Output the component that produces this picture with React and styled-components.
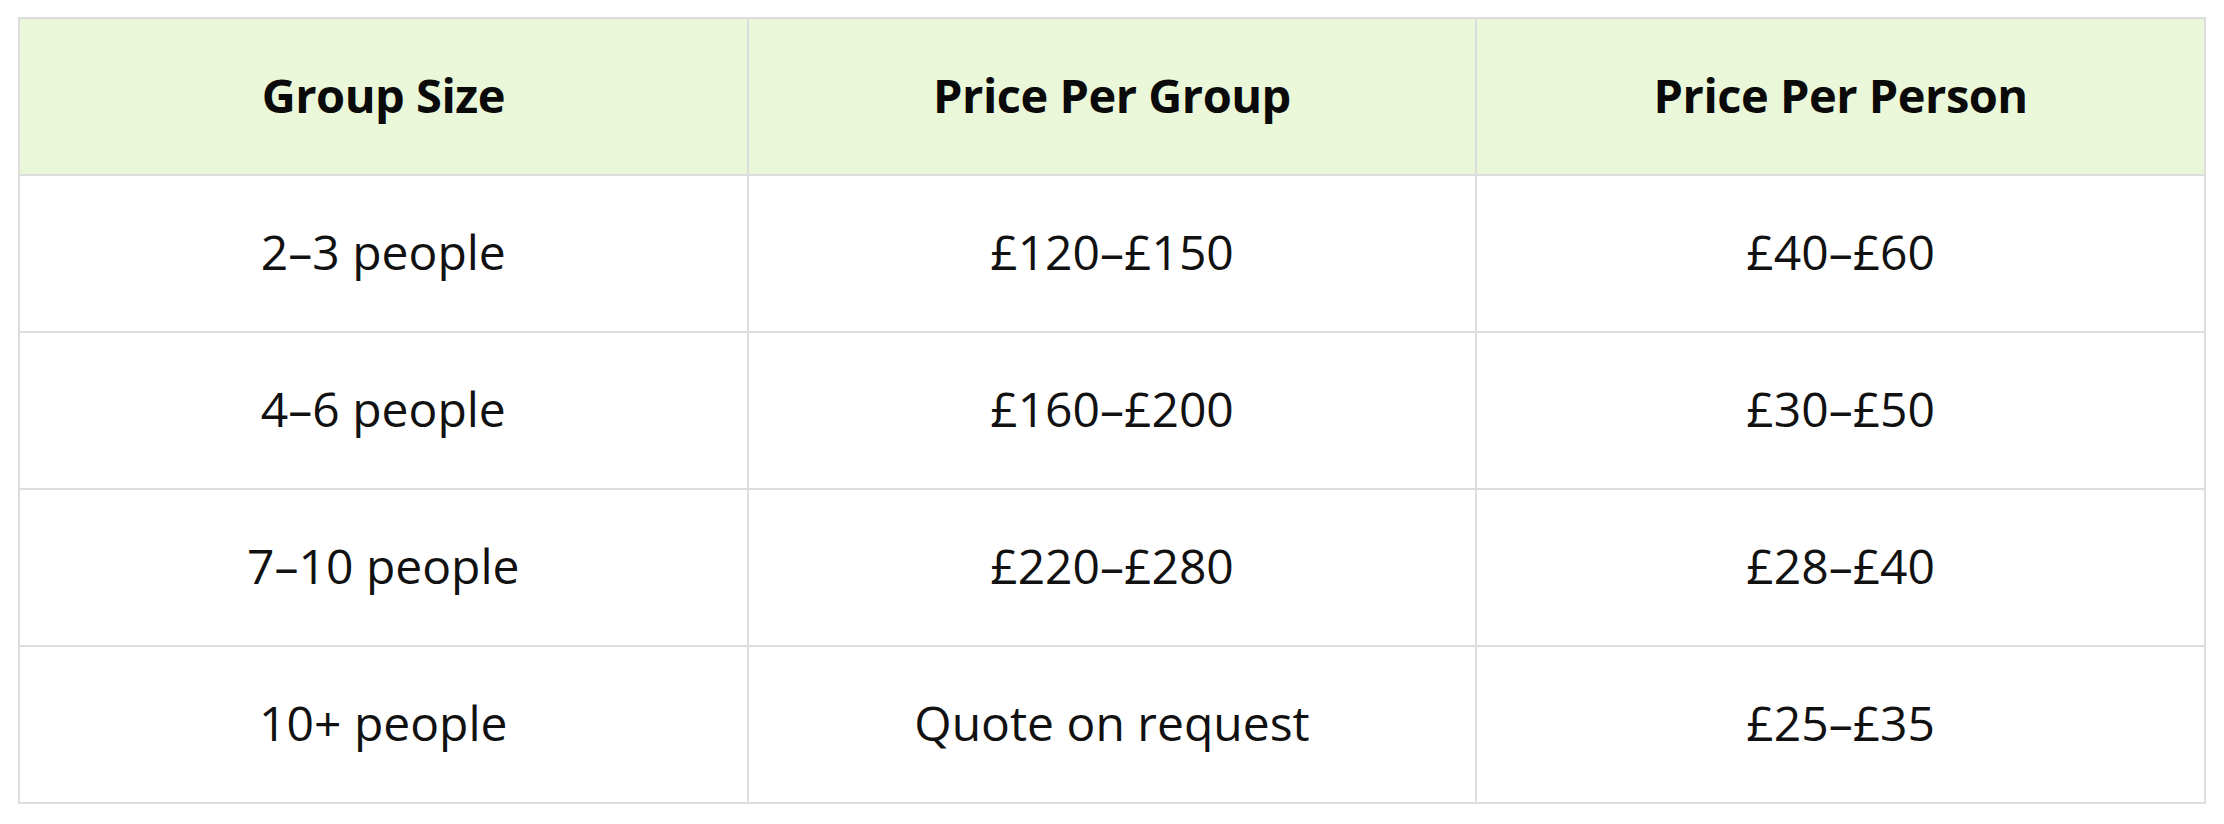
import React from 'react'
import styled, { createGlobalStyle } from 'styled-components'

const GlobalStyle = createGlobalStyle`
  html, body {
    margin: 0;
    padding: 0;
    background: #ffffff;
  }
  body {
    font-family: "Open Sans", "Liberation Sans", sans-serif;
    color: #111111;
  }
`

const Page = styled.div`
  padding: 17px 18px 0 18px;
  width: 2224px;
  box-sizing: border-box;
`

const Table = styled.table`
  width: 2188px;
  border-collapse: collapse;
  table-layout: fixed;
`

const HeadCell = styled.th`
  height: 151px;
  background: #eaf7d9;
  border: 2px solid #dddddd;
  font-size: 47px;
  font-weight: 700;
  letter-spacing: -0.5px;
  text-align: center;
  vertical-align: middle;
  padding: 0 0 4px 0;
  color: #0a0a0a;
`

const Cell = styled.td`
  height: 151px;
  border: 2px solid #dddddd;
  font-size: 48px;
  font-weight: 400;
  text-align: center;
  vertical-align: middle;
  padding: 0 0 4px 0;
  color: #111111;
`

const rows = [
  ['2–3 people', '£120–£150', '£40–£60'],
  ['4–6 people', '£160–£200', '£30–£50'],
  ['7–10 people', '£220–£280', '£28–£40'],
  ['10+ people', 'Quote on request', '£25–£35'],
]

export default function App() {
  return (
    <Page>
      <GlobalStyle />
      <Table>
        <thead>
          <tr>
            <HeadCell>Group Size</HeadCell>
            <HeadCell>Price Per Group</HeadCell>
            <HeadCell>Price Per Person</HeadCell>
          </tr>
        </thead>
        <tbody>
          {rows.map((r, i) => (
            <tr key={i}>
              {r.map((c, j) => <Cell key={j}>{c}</Cell>)}
            </tr>
          ))}
        </tbody>
      </Table>
    </Page>
  )
}
